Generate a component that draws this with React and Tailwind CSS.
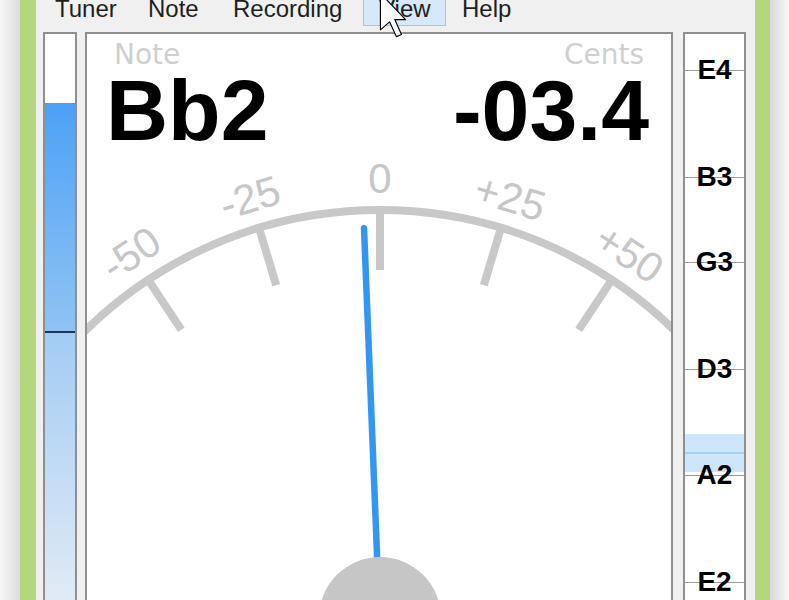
import React from "react";

const SANS = { fontFamily: '"Liberation Sans", Arial, sans-serif' };
const DEJAVU = { fontFamily: '"DejaVu Sans", Verdana, sans-serif' };

const menu = [
  { id: "tuner", title: "Tuner", w: "w-[93px]" },
  { id: "note", title: "Note", w: "w-[85px]" },
  { id: "recording", title: "Recording", w: "w-[146px]" },
  { id: "view", title: "View", w: "w-[83px]", hover: true },
  { id: "help", title: "Help", w: "w-[80px]" },
];

const strings = [
  { name: "E4", freq: 329.63 },
  { name: "B3", freq: 246.94 },
  { name: "G3", freq: 196.0 },
  { name: "D3", freq: 146.83 },
  { name: "A2", freq: 110.0 },
  { name: "E2", freq: 82.41 },
];

// 256px per octave, E4 sits 36px below the top of the strip
const yFor = (freq) => 36 + 256 * Math.log2(329.63 / freq);

const ticks = [
  { deg: -33.5, label: "-50" },
  { deg: -16.75, label: "-25" },
  { deg: 0, label: "0" },
  { deg: 16.75, label: "+25" },
  { deg: 33.5, label: "+50" },
];

const cents = -3.4;

const Gauge = () => {
  const cx = 380;
  const cy = 630;
  const r = 420;
  const a = (50 * Math.PI) / 180;
  const x0 = cx - r * Math.sin(a);
  const x1 = cx + r * Math.sin(a);
  const y0 = cy - r * Math.cos(a);

  return (
    <svg width="584" height="470" viewBox="87 153 584 470" className="block">
      <path
        d={`M ${x0} ${y0} A ${r} ${r} 0 0 1 ${x1} ${y0}`}
        fill="none"
        stroke="#c8c8c8"
        strokeWidth="8"
      />
      {ticks.map((t) => (
        <g key={t.label} transform={`rotate(${t.deg} ${cx} ${cy})`}>
          <line x1={cx} y1={270} x2={cx} y2={208} stroke="#c8c8c8" strokeWidth="8" />
          <text
            x={cx}
            y={193}
            textAnchor="middle"
            fontSize="42"
            fill="#c6c6c6"
            style={SANS}
          >
            {t.label}
          </text>
        </g>
      ))}
      <line
        x1={cx}
        y1={cy}
        x2={cx}
        y2={228}
        stroke="#3197f0"
        strokeWidth="6.5"
        strokeLinecap="round"
        transform={`rotate(${cents * 0.67} ${cx} ${cy})`}
      />
      <circle cx={cx} cy={618} r={61} fill="#c6c6c6" />
    </svg>
  );
};

const LevelMeter = () => (
  <div className="w-[34px] border-2 border-[#8f8f8f] bg-white flex flex-col">
    <div className="h-[69px] bg-white" />
    <div className="h-[228px] bg-linear-to-b from-[#4ba1f6] to-[#8fc3f2]" />
    <div className="h-[2px] bg-[#1d3550]" />
    <div className="flex-1 bg-linear-to-b from-[#a2ccf4] to-[#e9eef4]" />
  </div>
);

const StringScale = () => {
  const bb2 = yFor(116.54);
  return (
    <div className="w-[63px] border-2 border-[#8f8f8f] bg-white relative">
      <div
        className="absolute left-0 right-0 h-[38px] bg-[#cfe5fb]"
        style={{ top: bb2 - 20 }}
      />
      <div
        className="absolute left-0 right-0 h-[2px] bg-[#a9cff4]"
        style={{ top: bb2 - 2 }}
      />
      {strings.map((s) => {
        const y = yFor(s.freq);
        return (
          <div key={s.name}>
            <div
              className="absolute left-0 right-0 h-px bg-[#9c9c9c]"
              style={{ top: y }}
            />
            <div
              className="absolute left-0 right-0 h-[28px] flex justify-center text-[28px] leading-[28px] font-bold text-black"
              style={{ ...SANS, top: y - 14 }}
            >
              {s.name}
            </div>
          </div>
        );
      })}
    </div>
  );
};

export default function App() {
  return (
    <div className="relative w-[789px] h-[600px] overflow-hidden flex bg-white">
      <div className="w-[20px] bg-linear-to-r from-[#f7f7f7] to-[#dcdcdc]" />
      <div className="w-[16px] bg-[#b6d57f]" />

      <div className="w-[719px] h-[640px] bg-[#f0f0f0] flex flex-col">
        {/* menu bar */}
        <div className="h-[32px] flex items-start pl-[3px]" style={SANS}>
          {menu.map((item) => (
            <div
              key={item.id}
              className={`${item.w} h-[26px] text-[24px] leading-[18px] text-[#1e1e1e] ${
                item.hover
                  ? "bg-[#d6e8f9] border-x border-b border-[#9fc6ee] pl-[15px]"
                  : "pl-4"
              }`}
            >
              {item.title}
            </div>
          ))}
        </div>

        <div className="flex-1 flex pl-[7px] gap-[8px]">
          <LevelMeter />

          <div className="w-[588px] border-2 border-[#8f8f8f] bg-white flex flex-col">
            <div className="pt-[7px]">
              <div className="h-[28px] flex justify-between text-[28px] leading-[28px] text-[#cfcfcf]" style={DEJAVU}>
                <span className="pl-[27px]">Note</span>
                <span className="pr-[27px]">Cents</span>
              </div>
              <div
                className="-mt-[2px] flex justify-between text-[86px] leading-[86px] font-bold text-black"
                style={SANS}
              >
                <span className="pl-[19px]">Bb2</span>
                <span className="pr-[22px]">-03.4</span>
              </div>
            </div>
            <Gauge />
          </div>

          <div className="ml-[2px]">
            <div className="h-full flex">
              <StringScale />
            </div>
          </div>
        </div>
      </div>

      <div className="w-[15px] bg-[#b6d57f]" />
      <div className="w-[19px] bg-linear-to-r from-[#d8d8d8] to-[#f9f9f9]" />

      {/* mouse pointer */}
      <svg
        className="absolute left-[378px] top-[-9px]"
        width="30"
        height="48"
        viewBox="-1 -1 13 21"
      >
        <polygon
          points="0,0 0,16 4,12.5 7,19 9.2,18 6.3,11.5 11,11.5"
          fill="#ffffff"
          stroke="#000000"
          strokeWidth="0.5"
          strokeLinejoin="round"
        />
      </svg>
    </div>
  );
}
